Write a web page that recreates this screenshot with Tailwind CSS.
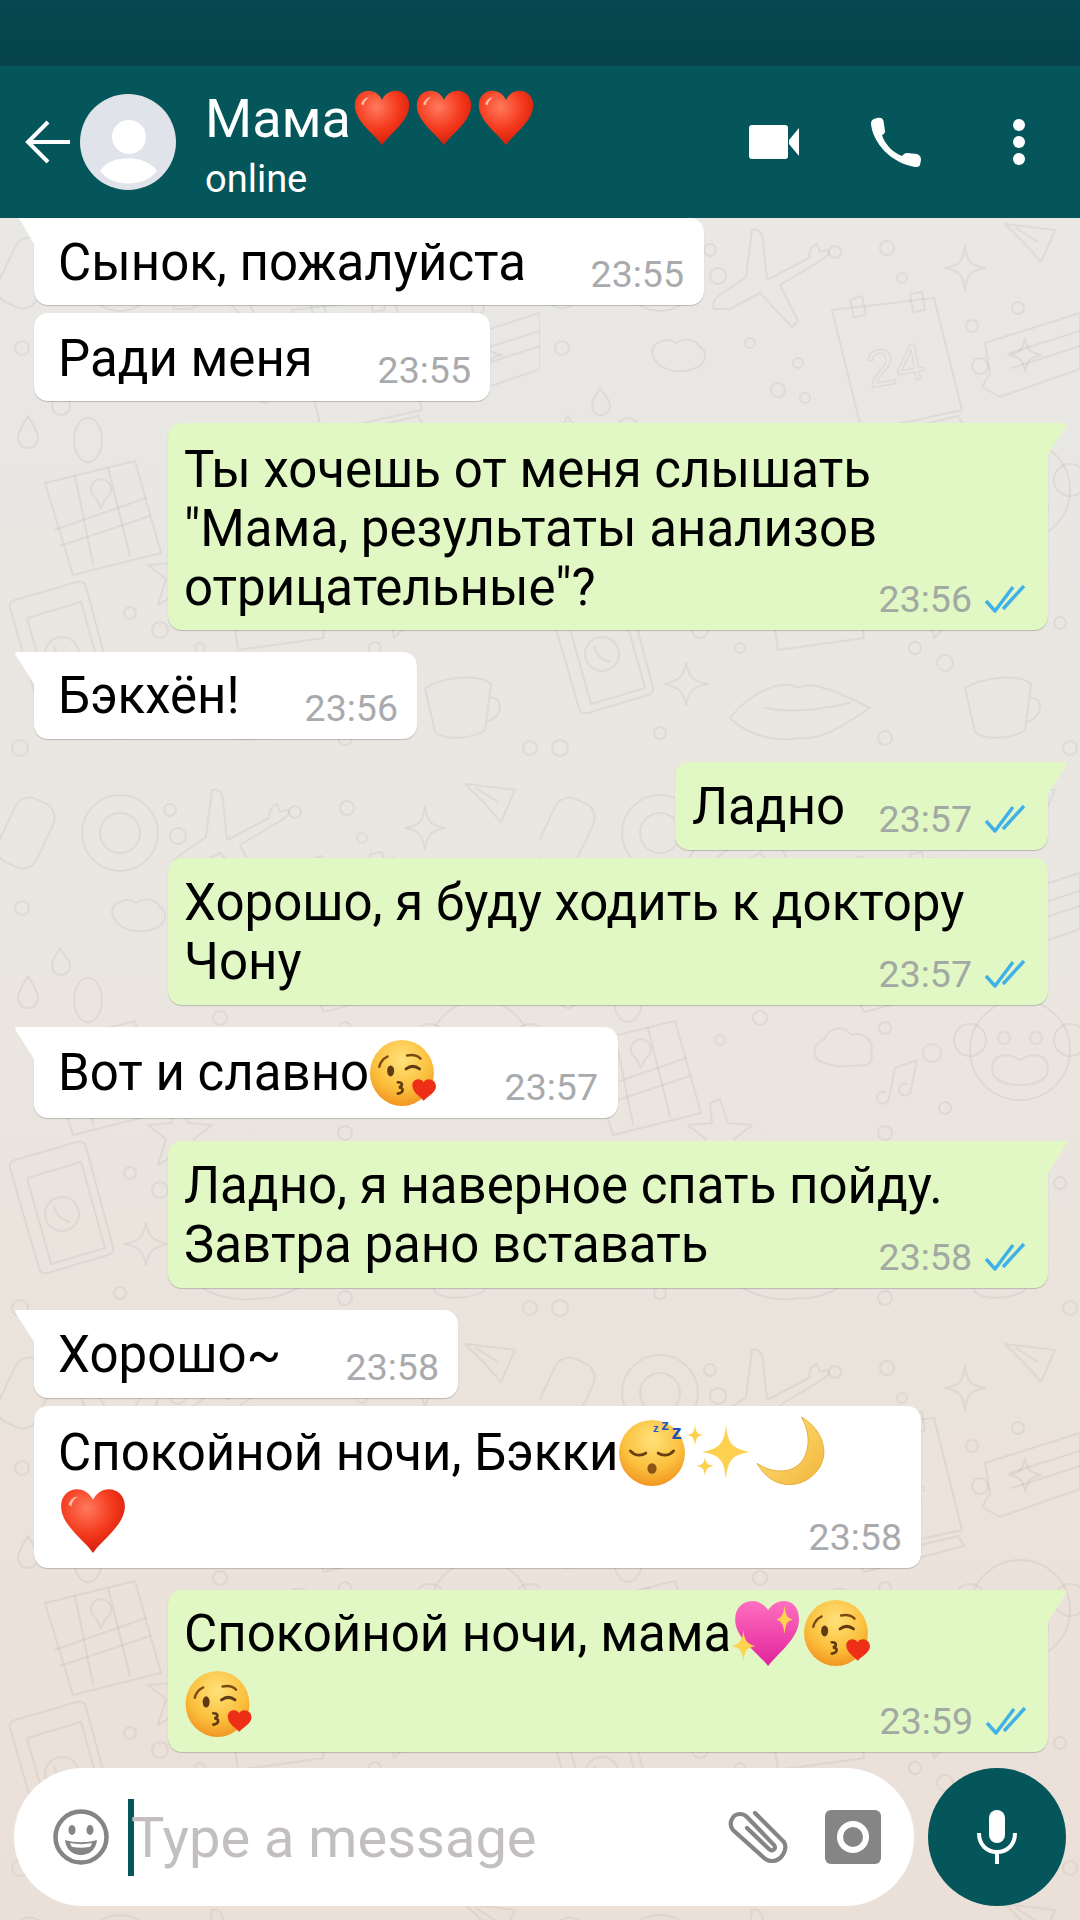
<!DOCTYPE html>
<html lang="ru"><head><meta charset="utf-8">
<script src="https://cdn.jsdelivr.net/npm/@tailwindcss/browser@4"></script>
</head>
<body class="m-0">
<svg width="0" height="0" class="absolute">
<defs>
<radialGradient id="hg" cx="40%" cy="30%" r="75%"><stop offset="0" stop-color="#ff7a5c"/><stop offset=".55" stop-color="#f4391d"/><stop offset="1" stop-color="#cf1c08"/></radialGradient>
<radialGradient id="fg" cx="50%" cy="30%" r="75%"><stop offset="0" stop-color="#ffe27a"/><stop offset=".6" stop-color="#fbbf3c"/><stop offset="1" stop-color="#f08e1c"/></radialGradient>
<linearGradient id="pg" x1="0" y1="0" x2="0" y2="1"><stop offset="0" stop-color="#ff6fc0"/><stop offset="1" stop-color="#e0239a"/></linearGradient>
<linearGradient id="mg" x1="0" y1="0" x2="1" y2="1"><stop offset="0" stop-color="#ffe37e"/><stop offset="1" stop-color="#f2b63a"/></linearGradient>
<symbol id="heart" viewBox="0 0 64 64"><path d="M32 62C24 50 2 36 2 18 2 8 9 2 17 2c7 0 12 4 15 10 3-6 8-10 15-10 8 0 15 6 15 16 0 18-22 32-30 44z" fill="url(#hg)"/><path d="M9 17c1-5 5-8 9-8-3 2-6 5-6 9z" fill="#ffb9a6"/></symbol>
<symbol id="kiss" viewBox="0 0 66 64"><ellipse cx="32" cy="32" rx="31" ry="32" fill="url(#fg)"/><path d="M10 26c1-5 4-8 8-10" fill="none" stroke="#7a4a12" stroke-width="2.4" stroke-linecap="round"/><path d="M37 15c5-1 10 0 13 3" fill="none" stroke="#7a4a12" stroke-width="2.4" stroke-linecap="round"/><ellipse cx="21" cy="30" rx="3.4" ry="5.4" fill="#5f3a12"/><path d="M36 28c4-3 9-3 13 0" fill="none" stroke="#5f3a12" stroke-width="3" stroke-linecap="round"/><path d="M28 41c5 0 5 4 1 5 5 0 5 5-1 6" fill="none" stroke="#5f3a12" stroke-width="2.6" stroke-linecap="round"/><path d="M53 59c-3-4-11-8-11-15 0-4 3-6 6-6 2 0 4 1 5 3 1-2 3-3 5-3 4 0 7 3 7 7 0 6-9 10-12 14z" fill="#ee2f17"/></symbol>
<symbol id="sleep" viewBox="0 0 66 66"><circle cx="33" cy="34" r="32" fill="url(#fg)"/><path d="M12 32c4 5 11 5 15 2M39 34c4 3 11 3 15-2" fill="none" stroke="#6a3f10" stroke-width="2.8" stroke-linecap="round"/><ellipse cx="33" cy="49" rx="4.5" ry="5" fill="#8a5518"/><text x="34" y="14" font-family="Liberation Sans" font-weight="700" font-size="11" fill="#2458c4">z</text><text x="42" y="12" font-family="Liberation Sans" font-weight="700" font-size="15" fill="#2458c4">z</text><text x="52" y="20" font-family="Liberation Sans" font-weight="700" font-size="20" fill="#1f4fb4">z</text></symbol>
<symbol id="spark" viewBox="0 0 66 66"><path d="M40 6c2 18 5 23 24 27-19 3-22 9-24 27-2-18-5-24-24-27 19-4 22-9 24-27z" fill="#fdd14f"/><path d="M9 6c1 7 2 9 8 10-6 1-7 3-8 11-1-8-2-10-8-11 6-1 7-3 8-10z" fill="#fdd14f"/><path d="M19 38c1 6 2 8 9 9-7 1-8 3-9 10-1-7-2-9-9-10 7-1 8-3 9-9z" fill="#fdd14f"/></symbol>
<symbol id="moon" viewBox="0 0 70 70"><path d="M44 1c22 12 29 38 14 54C44 71 16 73 1 46c16 11 36 10 45-4 7-12 6-28-2-41z" fill="url(#mg)" stroke="#e0a52e" stroke-width=".8"/></symbol>
<symbol id="pheart" viewBox="0 0 70 66"><path d="M38 65C28 52 6 38 6 20 6 8 14 2 23 2c6 0 12 4 15 9 3-5 9-9 15-9 9 0 15 6 15 18 0 18-20 32-30 45z" fill="url(#pg)"/><path d="M54 6c1 9 2 12 8 14-6 1-7 5-8 14-1-9-3-13-8-14 5-2 7-5 8-14z" fill="#fdd34f"/><path d="M14 30c1 10 3 13 12 16-9 1-11 5-12 15-1-10-3-14-12-15 9-3 11-6 12-16z" fill="#fdd34f"/></symbol>
<symbol id="ticks" viewBox="0 0 42 30"><path d="M2 17l9 10L29 3M19 25L40 2" fill="none" stroke="#3fb1e8" stroke-width="3.4" stroke-linejoin="round"/></symbol>
<pattern id="dood" width="540" height="560" patternUnits="userSpaceOnUse">
<g fill="none" stroke="#000" stroke-opacity=".05" stroke-width="2" stroke-linejoin="round" stroke-linecap="round">
<path d="M212 12c6-2 10 2 11 10l4 40 42-22c0-6 2-12 8-14l3 8 8-2c3 4-3 8-8 11l-40 24 18 36-6 6-32-34-30 16-16 0c-2-6 0-10 6-14l26-18z"/>
<path d="M292 92l102-12 28 112-100 22z"/><path d="M310 82l12-4 4 18-12 4zM370 76l12-2 3 18-12 2z"/><path d="M318 222l100-24 6 10-100 26z"/><text x="330" y="170" font-family="Liberation Sans" font-size="52" fill="none" stroke="#000" stroke-opacity=".05" stroke-width="1.500" transform="rotate(-10 330 170)">24</text>
<path d="M425 28c2 16 6 20 20 22-14 3-18 6-20 22-2-16-6-19-20-22 14-2 18-6 20-22z"/><path d="M485 120c2 12 5 15 17 17-12 2-15 5-17 17-2-12-5-15-17-17 12-2 15-5 17-17z"/><path d="M146 445c3 14 7 18 22 21-15 3-19 7-22 21-3-14-7-18-22-21 15-3 19-7 22-21z"/>
<path d="M465 6l50 6-14 32-16-18z"/><path d="M476 10l22 14"/><path d="M445 125l95-30v56l-80 28-18-10 8-14z"/><path d="M470 135l70-22M472 150l68-22"/>
<path d="M112 135c0-12 16-16 24-10 8-6 20-4 24 4 8 4 6 16-2 20-12 6-40 8-46-14z"/><path d="M285 285c-14-2-14-20 0-24 2-12 20-14 26-4 12-4 24 6 20 18 4 10-6 14-12 12-10 2-26 2-34-2z"/>
<path d="M45 265l90-22 26 92-88 22z"/><path d="M75 258l18 88M108 250l22 88"/><path d="M54 312l92-32M60 328l90-30"/><path d="M96 280a10 10 0 1 1 10 0l-5 10z"/>
<path d="M15 382l62-18c5-1 8 1 9 5l27 100c1 4-1 7-5 8l-60 18c-5 1-8-1-9-5L10 390c-1-4 1-7 5-8z"/><path d="M27 400l54-16 24 86-54 16z"/><circle cx="62" cy="436" r="17"/><path d="M54 428c2 10 8 14 16 16"/>
<path d="M190 500c20-25 50-40 70-30 8-8 35 2 70 20-30 20-50 32-70 30-20 4-50 0-70-20z"/><path d="M225 490c25 5 55 2 85-5"/>
<path d="M355 290l-6 30a6 6 0 1 1-4-6M355 290l22-8-6 30a6 6 0 1 1-4-6"/><path d="M400 380c-14 0-20 16-8 26l2 14 10-10c20-6 14-30-4-30zM438 370c-12 0-18 14-8 24l2 10 8-8c16-6 12-26-2-26z"/>
<path d="M170 325l10-4 8 24 24 2-18 14 6 26-20-14-22 14 8-26-18-14 24-2z"/>
<circle cx="480" cy="272" r="50"/><circle cx="430" cy="262" r="16"/><circle cx="530" cy="262" r="16"/><path d="M452 292c0-16 14-18 28-10 14-8 28-6 28 10 0 20-56 20-56 0z"/><circle cx="464" cy="260" r="6"/><circle cx="496" cy="260" r="6"/>
<path d="M425 470c20-12 55-14 66-4l-6 46c-14 10-42 10-50 2zM490 480c14-2 14 20-4 24"/><path d="M28 198c-4 8-10 14-10 22a10 10 0 0 0 20 0c0-8-6-14-10-22zM60 170c-4 8-8 10-8 18a9 9 0 0 0 18 0c0-8-6-10-10-18z"/><ellipse cx="88" cy="222" rx="14" ry="22"/>
<path d="M230 380l86-12 8 52-86 12z"/><path d="M232 382l44 26 38-38"/><rect x="5" y="20" width="42" height="70" rx="16" transform="rotate(25 26 55)"/><circle cx="120" cy="55" r="38"/><circle cx="120" cy="55" r="20"/>
<g><circle cx="170" cy="32" r="6"/><circle cx="178" cy="58" r="8"/><circle cx="295" cy="34" r="6"/><circle cx="347" cy="30" r="7"/><circle cx="362" cy="60" r="5"/><circle cx="210" cy="125" r="5"/><circle cx="258" cy="145" r="5"/><circle cx="238" cy="172" r="7"/><circle cx="265" cy="180" r="5"/><circle cx="432" cy="108" r="6"/><circle cx="440" cy="148" r="8"/><circle cx="478" cy="90" r="6"/><circle cx="22" cy="130" r="7"/><circle cx="190" cy="215" r="6"/><circle cx="220" cy="240" r="7"/><circle cx="180" cy="262" r="5"/><circle cx="345" cy="250" r="6"/><circle cx="392" cy="275" r="9"/><circle cx="405" cy="330" r="6"/><circle cx="130" cy="395" r="6"/><circle cx="160" cy="412" r="8"/><circle cx="200" cy="430" r="5"/><circle cx="345" cy="355" r="7"/><circle cx="375" cy="430" r="6"/><circle cx="405" cy="445" r="8"/><circle cx="345" cy="520" r="7"/><circle cx="520" cy="405" r="6"/><circle cx="500" cy="385" r="5"/><circle cx="20" cy="530" r="8"/><circle cx="120" cy="515" r="6"/><circle cx="530" cy="530" r="7"/></g>
</g></pattern>
</defs>
</svg>

<div class="w-[1080px] h-[1920px] flex flex-col overflow-hidden font-['Roboto',sans-serif]">
  <div class="h-[66px] shrink-0 bg-gradient-to-b from-[#05484f] to-[#04444a]"></div>
  <header class="h-[152px] shrink-0 bg-[#04565a] flex items-center text-white z-10">
    <svg class="w-[46px] h-[44px] ml-[25px]" viewBox="0 0 46 44"><path d="M45 22H4M23 2L3 22l20 20" fill="none" stroke="#fff" stroke-width="4"/></svg>
    <svg class="w-[96px] h-[96px] ml-[9px] shrink-0" viewBox="0 0 96 96"><circle cx="48" cy="48" r="48" fill="#e0e4ea"/><circle cx="49" cy="43" r="17" fill="#fff"/><path d="M20 77C30 60 66 60 77 77 70 86 58 89.500 48 89.500 38 89.500 27 86 20 77z" fill="#fff"/></svg>
    <div class="ml-[29px] flex flex-col pt-[6px]">
      <div class="flex items-center h-[62px] -mt-[2px]">
        <span class="text-[54px] leading-[62px]">Мама</span>
        <svg class="w-[62px] h-[58px] shrink-0 -mt-[2px]"><use href="#heart"/></svg><svg class="w-[62px] h-[58px] shrink-0 -mt-[2px]"><use href="#heart"/></svg><svg class="w-[62px] h-[58px] shrink-0 -mt-[2px]"><use href="#heart"/></svg>
      </div>
      <span class="text-[38px] leading-[44px] mt-[7px]">online</span>
    </div>
    <svg class="w-[50px] h-[34px] ml-auto" viewBox="0 0 50 34"><path d="M3 0h33a3 3 0 0 1 3 3v28a3 3 0 0 1-3 3H3a3 3 0 0 1-3-3V3a3 3 0 0 1 3-3zM40 15L50 3v28L40 19z" fill="#fff"/></svg>
    <svg class="w-[50px] h-[50px] ml-[72px]" viewBox="0 0 50 50"><path d="M6 1C9 0 12 1 12.500 4L14 14C14 16 13 17 11 18 13 26 22 36 31 39 33 37 34 36 36 36L46 37C49 38 50 40 50 43L49 48C48 50 46 50 44 50 20 46 2 26 0 7 0 3 2 2 6 1z" fill="#fff"/></svg>
    <div class="ml-[92px] mr-[55px] flex flex-col gap-[5px]">
      <div class="w-[12px] h-[12px] rounded-full bg-white"></div><div class="w-[12px] h-[12px] rounded-full bg-white"></div><div class="w-[12px] h-[12px] rounded-full bg-white"></div>
    </div>
  </header>

  <main class="relative flex-1 bg-gradient-to-b from-[#e9e8e5] via-[#eae5df] to-[#ebe0d8] flex flex-col items-start text-black text-[51px] leading-[59px]">
    <svg class="absolute inset-0 w-full h-full" aria-hidden="true"><rect width="100%" height="100%" fill="url(#dood)"/></svg>

    <div class="relative ml-[34px] w-[670px] h-[87px] grid bg-white rounded-b-[14px] rounded-tr-[14px] pl-[24px] pr-[20px] shadow-[0_1px_1px_rgba(0,0,0,.2)]">
      <svg class="absolute -left-[20px] top-0 w-[20px] h-[26px]" viewBox="0 0 20 26"><path d="M5 0h15v26z" fill="#fff"/></svg>
      <div class="[grid-area:1/1] pt-[15px]">Сынок, пожалуйста</div>
      <div class="[grid-area:1/1] self-end justify-self-end text-[37.500px] leading-[40px] pb-[11px] text-[#a8aaad]">23:55</div>
    </div>
    <div class="relative mt-[8px] ml-[34px] w-[456px] h-[88px] grid bg-white rounded-[14px] pl-[24px] pr-[19px] shadow-[0_1px_1px_rgba(0,0,0,.2)]">
      <div class="[grid-area:1/1] pt-[16px]">Ради меня</div>
      <div class="[grid-area:1/1] self-end justify-self-end text-[37.500px] leading-[40px] pb-[11px] text-[#a8aaad]">23:55</div>
    </div>
    <div class="relative mt-[22px] ml-[168px] w-[880px] h-[207px] grid bg-[#e1f7c4] rounded-b-[14px] rounded-tl-[14px] pl-[16px] pr-[22px] shadow-[0_1px_1px_rgba(0,0,0,.2)]">
      <svg class="absolute -right-[20px] top-0 w-[20px] h-[32px]" viewBox="0 0 20 32"><path d="M0 0h18l1 2L0 32z" fill="#e1f7c4"/></svg>
      <div class="[grid-area:1/1] pt-[17px]">Ты хочешь от меня слышать<br>"Мама, результаты анализов<br>отрицательные"?</div>
      <div class="[grid-area:1/1] self-end justify-self-end flex items-center gap-[12px] text-[37.500px] leading-[40px] pb-[11px] text-[#a2a9a2]">23:56<svg class="w-[42px] h-[30px]"><use href="#ticks"/></svg></div>
    </div>
    <div class="relative mt-[22px] ml-[34px] w-[383px] h-[87px] grid bg-white rounded-b-[14px] rounded-tr-[14px] pl-[24px] pr-[19px] shadow-[0_1px_1px_rgba(0,0,0,.2)]">
      <svg class="absolute -left-[20px] top-0 w-[20px] h-[32px]" viewBox="0 0 20 32"><path d="M2 0h18v32L1 2z" fill="#fff"/></svg>
      <div class="[grid-area:1/1] pt-[14px]">Бэкхён!</div>
      <div class="[grid-area:1/1] self-end justify-self-end text-[37.500px] leading-[40px] pb-[11px] text-[#a8aaad]">23:56</div>
    </div>
    <div class="relative mt-[23px] ml-[675px] w-[373px] h-[88px] grid bg-[#e1f7c4] rounded-b-[14px] rounded-tl-[14px] pl-[17px] pr-[22px] shadow-[0_1px_1px_rgba(0,0,0,.2)]">
      <svg class="absolute -right-[20px] top-0 w-[20px] h-[32px]" viewBox="0 0 20 32"><path d="M0 0h18l1 2L0 32z" fill="#e1f7c4"/></svg>
      <div class="[grid-area:1/1] pt-[15px]">Ладно</div>
      <div class="[grid-area:1/1] self-end justify-self-end flex items-center gap-[12px] text-[37.500px] leading-[40px] pb-[11px] text-[#a2a9a2]">23:57<svg class="w-[42px] h-[30px]"><use href="#ticks"/></svg></div>
    </div>
    <div class="relative mt-[8px] ml-[168px] w-[880px] h-[147px] grid bg-[#e1f7c4] rounded-[14px] pl-[16px] pr-[22px] shadow-[0_1px_1px_rgba(0,0,0,.2)]">
      <div class="[grid-area:1/1] pt-[15px]">Хорошо, я буду ходить к доктору<br>Чону</div>
      <div class="[grid-area:1/1] self-end justify-self-end flex items-center gap-[12px] text-[37.500px] leading-[40px] pb-[11px] text-[#a2a9a2]">23:57<svg class="w-[42px] h-[30px]"><use href="#ticks"/></svg></div>
    </div>
    <div class="relative mt-[22px] ml-[34px] w-[584px] h-[91px] grid bg-white rounded-b-[14px] rounded-tr-[14px] pl-[24px] pr-[20px] shadow-[0_1px_1px_rgba(0,0,0,.2)]">
      <svg class="absolute -left-[20px] top-0 w-[20px] h-[32px]" viewBox="0 0 20 32"><path d="M2 0h18v32L1 2z" fill="#fff"/></svg>
      <div class="[grid-area:1/1] pt-[16px] flex items-center h-[75px]">Вот и славно<svg class="w-[68px] h-[66px] shrink-0"><use href="#kiss"/></svg></div>
      <div class="[grid-area:1/1] self-end justify-self-end text-[37.500px] leading-[40px] pb-[11px] text-[#a8aaad]">23:57</div>
    </div>
    <div class="relative mt-[23px] ml-[168px] w-[880px] h-[147px] grid bg-[#e1f7c4] rounded-b-[14px] rounded-tl-[14px] pl-[16px] pr-[22px] shadow-[0_1px_1px_rgba(0,0,0,.2)]">
      <svg class="absolute -right-[20px] top-0 w-[20px] h-[32px]" viewBox="0 0 20 32"><path d="M0 0h18l1 2L0 32z" fill="#e1f7c4"/></svg>
      <div class="[grid-area:1/1] pt-[15px]">Ладно, я наверное спать пойду.<br>Завтра рано вставать</div>
      <div class="[grid-area:1/1] self-end justify-self-end flex items-center gap-[12px] text-[37.500px] leading-[40px] pb-[11px] text-[#a2a9a2]">23:58<svg class="w-[42px] h-[30px]"><use href="#ticks"/></svg></div>
    </div>
    <div class="relative mt-[22px] ml-[34px] w-[424px] h-[88px] grid bg-white rounded-b-[14px] rounded-tr-[14px] pl-[24px] pr-[19px] shadow-[0_1px_1px_rgba(0,0,0,.2)]">
      <svg class="absolute -left-[20px] top-0 w-[20px] h-[32px]" viewBox="0 0 20 32"><path d="M2 0h18v32L1 2z" fill="#fff"/></svg>
      <div class="[grid-area:1/1] pt-[15px]">Хорошо~</div>
      <div class="[grid-area:1/1] self-end justify-self-end text-[37.500px] leading-[40px] pb-[11px] text-[#a8aaad]">23:58</div>
    </div>
    <div class="relative mt-[8px] ml-[34px] w-[887px] h-[162px] grid bg-white rounded-[14px] pl-[24px] pr-[19px] shadow-[0_1px_1px_rgba(0,0,0,.2)]">
      <div class="[grid-area:1/1] pt-[12px] flex flex-col">
        <div class="flex items-center h-[68px]">Спокойной ночи, Бэкки<svg class="w-[68px] h-[68px] shrink-0"><use href="#sleep"/></svg><svg class="w-[66px] h-[66px] shrink-0"><use href="#spark"/></svg><svg class="w-[72px] h-[72px] shrink-0 ml-[4px]"><use href="#moon"/></svg></div>
        <svg class="w-[70px] h-[68px] shrink-0 mt-[1px]"><use href="#heart"/></svg>
      </div>
      <div class="[grid-area:1/1] self-end justify-self-end text-[37.500px] leading-[40px] pb-[11px] text-[#a8aaad]">23:58</div>
    </div>
    <div class="relative mt-[22px] ml-[168px] w-[880px] h-[162px] grid bg-[#e1f7c4] rounded-b-[14px] rounded-tl-[14px] pl-[16px] pr-[21px] shadow-[0_1px_1px_rgba(0,0,0,.2)]">
      <svg class="absolute -right-[20px] top-0 w-[20px] h-[32px]" viewBox="0 0 20 32"><path d="M0 0h18l1 2L0 32z" fill="#e1f7c4"/></svg>
      <div class="[grid-area:1/1] pt-[9px] flex flex-col">
        <div class="flex items-center h-[68px]">Спокойной ночи, мама<svg class="w-[72px] h-[68px] shrink-0 -ml-[2px]"><use href="#pheart"/></svg><svg class="w-[68px] h-[66px] shrink-0 ml-[2px]"><use href="#kiss"/></svg></div>
        <svg class="w-[69px] h-[66px] shrink-0 mt-[4px]"><use href="#kiss"/></svg>
      </div>
      <div class="[grid-area:1/1] self-end justify-self-end flex items-center gap-[12px] text-[37.500px] leading-[40px] pb-[11px] text-[#a2a9a2]">23:59<svg class="w-[42px] h-[30px]"><use href="#ticks"/></svg></div>
    </div>

    <div class="relative mt-[16px] ml-[14px]">
      <div class="w-[900px] h-[138px] rounded-[69px] bg-white flex items-center">
        <svg class="w-[56px] h-[56px] ml-[39px] shrink-0" viewBox="0 0 56 56"><circle cx="28" cy="28" r="25.500" fill="none" stroke="#858585" stroke-width="4.500"/><ellipse cx="19" cy="21" rx="3.500" ry="5" fill="#858585"/><ellipse cx="37" cy="21" rx="3.500" ry="5" fill="#858585"/><path d="M12 31c10 3 22 3 32 0-1 10-8 15-16 15s-15-5-16-15z" fill="#858585"/><path d="M17 34c7 1.500 15 1.500 22 0-1 3-2 4-3 4-5 1-11 1-16 0-1 0-2-1-3-4z" fill="#fff"/></svg>
        <div class="w-[6px] h-[77px] bg-[#04565a] ml-[19px] shrink-0"></div>
        <span class="text-[56px] leading-[60px] text-[#c3bfbf] -ml-[3px] mt-[2px]">Type a message</span>
        <svg class="w-[60px] h-[53px] ml-auto shrink-0" viewBox="0 0 60 53"><path d="M27 2L56 31C60 38 54 50 44 50 40 50 37 48 35 46L5 19C0 13 4 3 12 3 15 3 17 4 19 6L46 34C49 38 44 41 41 38L19 17" fill="none" stroke="#858585" stroke-width="4.200" stroke-linecap="round"/></svg>
        <svg class="w-[56px] h-[54px] ml-[37px] mr-[33px] shrink-0" viewBox="0 0 56 54"><rect width="56" height="54" rx="6" fill="#858585"/><circle cx="28" cy="27" r="16" fill="#fff"/><circle cx="28" cy="27" r="10" fill="#858585"/></svg>
      </div>
      <div class="absolute top-0 left-[914px] w-[138px] h-[138px] rounded-full bg-[#04565a] flex items-center justify-center">
        <svg class="w-[40px] h-[54px]" viewBox="0 0 40 54"><rect x="12" y="0" width="16" height="33" rx="8" fill="#fff"/><path d="M2 23c0 12 8 19 18 19s18-7 18-19" fill="none" stroke="#fff" stroke-width="4"/><path d="M20 40v14" stroke="#fff" stroke-width="4"/></svg>
      </div>
    </div>
  </main>
</div>
</body></html>
